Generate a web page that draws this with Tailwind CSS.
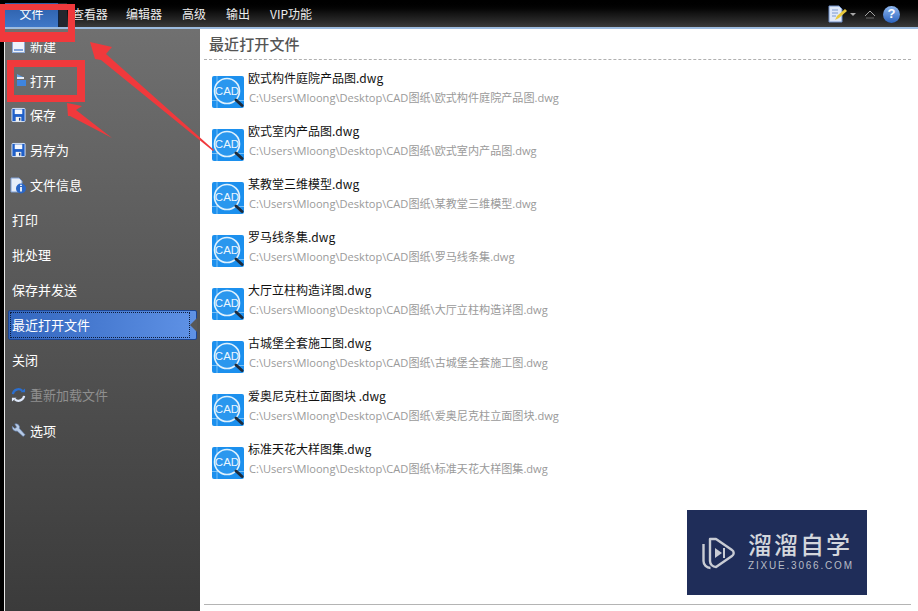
<!DOCTYPE html>
<html><head><meta charset="utf-8"><title>CAD</title>
<script src="https://cdn.jsdelivr.net/npm/@tailwindcss/browser@4"></script></head>
<body class="m-0 overflow-hidden bg-white">
<div class="relative w-[918px] h-[611px] overflow-hidden flex flex-col bg-white font-['Noto_Sans_CJK_SC','Liberation_Sans',sans-serif]">
  <svg width="0" height="0" class="absolute"><defs>
    <symbol id="cad" viewBox="0 0 32 32">
      <rect x="0" y="0" width="32" height="32" rx="2" fill="#1c90ee"/>
      <path d="M0 24.500H32M5 0V32" stroke="#8fcbf7" stroke-width="0.8"/>
      <circle cx="15" cy="15" r="12.500" fill="#2a97ee" stroke="#dff1fd" stroke-width="1.6"/>
      <path d="M24 24l6 5.500" stroke="#1d2b3c" stroke-width="3" stroke-linecap="round"/>
      <text x="15" y="19" text-anchor="middle" font-size="11.5" fill="#eaf6ff" font-family="Liberation Sans">CAD</text>
    </symbol>
    <symbol id="floppy" viewBox="0 0 16 16">
      <rect x="1" y="1" width="14" height="14" rx="1" fill="#1f5fc8" stroke="#dce8fa" stroke-width="1"/>
      <rect x="4" y="2" width="8" height="5" fill="#f4f7fd"/><rect x="5" y="10" width="6" height="5" fill="#f2f2f2"/><rect x="8.5" y="11" width="1.5" height="3" fill="#123a80"/>
    </symbol>
  </defs></svg>

  <!-- top menu bar -->
  <header class="h-[27px] shrink-0 flex items-end pl-[5px] pr-[18px] bg-gradient-to-b from-black via-[#141414] to-[#3a3a3a] text-[12px] text-[#ececec]">
    <div class="w-[53px] h-[24px] flex items-center justify-center pb-[2px] text-white bg-gradient-to-b from-[#2c5ea8] to-[#3f78c8]">文件</div>
    <div class="w-[9px] h-[24px] bg-[#23272e] border-l border-[#10233f]"></div>
    <nav class="flex items-center gap-[20px] h-[24px] ml-[5px] pb-[2px]">
      <span class="w-[34px] whitespace-nowrap tracking-[-0.1px]">查看器</span>
      <span class="w-[36px]">编辑器</span>
      <span class="w-[24px]">高级</span>
      <span class="w-[24px]">输出</span>
      <span class="whitespace-nowrap">VIP功能</span>
    </nav>
    <div class="ml-auto flex items-center h-[24px] pb-[2px]">
      <svg width="20" height="18" viewBox="0 0 20 18"><path d="M1 1h10l3 3v13H1z" fill="#dfe8f8" stroke="#6f8fc8"/><path d="M4 5h6M4 8h6M4 11h4" stroke="#7c9ad0"/><path d="M7 15l2-4 8-7 2 2-8 7z" fill="#e9c93c"/></svg>
      <svg width="8" height="6" viewBox="0 0 8 6" class="ml-[1px]"><path d="M1 2h6L4 5z" fill="#a8a8a8"/></svg>
      <svg width="12" height="10" viewBox="0 0 12 10" class="ml-[7px]"><path d="M1 7l5-5 5 5" fill="none" stroke="#a0a0a0"/><path d="M2 9h8" stroke="#666"/></svg>
      <div class="ml-[7px] w-[17px] h-[17px] rounded-full bg-gradient-to-b from-[#8fb7ee] to-[#2a62bd] flex items-center justify-center text-white text-[13px] font-bold font-['Liberation_Sans']">?</div>
    </div>
  </header>
  <div class="h-[2px] shrink-0 bg-[#9dbce0] ml-[5px]"></div>

  <div class="flex flex-1 min-h-0">
    <div class="w-[5px] shrink-0 bg-black border-r border-[#e8e8e8]"></div>
    <!-- sidebar -->
    <aside class="w-[195px] shrink-0 bg-gradient-to-b from-[#707070] to-[#3b3b3b] text-[13px] text-white">
      <div class="-mt-[1px]">
      <div class="h-[34.9px] flex items-center pl-[6px] gap-[4px]">
        <svg width="15" height="16" viewBox="0 0 15 16" class="shrink-0"><rect x="1.5" y="0.5" width="12" height="15" fill="#eef3fb" stroke="#8eaad6"/><path d="M3 13h9" stroke="#7fa2dc" stroke-width="2"/></svg><span>新建</span>
      </div>
      <div class="h-[34.9px] flex items-center pl-[6px] gap-[4px]">
        <svg width="15" height="16" viewBox="0 0 15 16" class="shrink-0"><path d="M6 2l6 3H6z" fill="#5fa0e8"/><path d="M6 5h7v2H6z" fill="#e7eefa"/><path d="M6 8h9v6H6z" fill="#3f85de"/></svg><span>打开</span>
      </div>
      <div class="h-[34.9px] flex items-center pl-[6px] gap-[4px]">
        <svg width="15" height="16" class="shrink-0"><use href="#floppy"/></svg><span>保存</span>
      </div>
      <div class="h-[34.9px] flex items-center pl-[6px] gap-[4px]">
        <svg width="15" height="16" class="shrink-0"><use href="#floppy"/></svg><span>另存为</span>
      </div>
      <div class="h-[34.9px] flex items-center pl-[5px] gap-[3px]">
        <svg width="17" height="17" viewBox="0 0 17 17" class="shrink-0"><path d="M1 1h8l3 3v11H1z" fill="#e6edf9" stroke="#7f9fd4"/><circle cx="11" cy="11.5" r="5" fill="#2a66c6"/><path d="M11 10v4.5M11 7.7v1.3" stroke="#fff" stroke-width="1.7"/></svg><span>文件信息</span>
      </div>
      <div class="h-[34.9px] flex items-center pl-[7px]">打印</div>
      <div class="h-[34.9px] flex items-center pl-[7px]">批处理</div>
      <div class="h-[34.9px] flex items-center pl-[7px]">保存并发送</div>
      <div class="h-[34.9px] flex items-center pl-[3px]">
        <div class="relative w-[189px] h-[30px] rounded-[2px] border border-[#1c4592] bg-gradient-to-r from-[#3366be] to-[#5f92e6] flex items-center">
          <div class="absolute left-[1px] top-[1px] right-[6px] bottom-[1px] border border-dotted border-[#0d1c3a]"></div>
          <span class="pl-[3px]">最近打开文件</span>
          <svg width="7" height="14" viewBox="0 0 7 14" class="absolute right-[-1px] top-[7px]"><path d="M7 0L0 7l7 7z" fill="#585858"/></svg>
        </div>
      </div>
      <div class="h-[34.9px] flex items-center pl-[7px]">关闭</div>
      <div class="h-[36px] flex items-center pl-[6px] gap-[4px]">
        <svg width="15" height="16" viewBox="0 0 16 16" class="shrink-0" fill="none"><path d="M2 7a6 6 0 0 1 10-3.5" stroke="#2b6fd0" stroke-width="2.4"/><path d="M14 9a6 6 0 0 1-10 3.5" stroke="#dfe9fa" stroke-width="2.4"/><path d="M10 5h5V1z" fill="#2b6fd0"/><path d="M6 11H1v4z" fill="#dfe9fa"/></svg><span class="text-[#8f8f8f]">重新加载文件</span>
      </div>
      <div class="h-[34.9px] flex items-center pl-[6px] gap-[4px]">
        <svg width="15" height="16" viewBox="0 0 16 16" class="shrink-0"><path d="M4 1.5A4 4 0 0 1 9 6.5l6 6.500-2 2-6.500-6A4 4 0 0 1 1.500 4L4 6.500 6 5z" fill="#b8cbe6" stroke="#5f7fb4" stroke-width="0.6"/></svg><span>选项</span>
      </div>
      </div>
    </aside>

    <!-- main -->
    <main class="relative flex-1 min-w-0 flex flex-col pl-[4px] pr-[7px] bg-white">
      <h1 class="h-[31px] shrink-0 pl-[5px] pt-[3px] text-[15px] leading-[24px] font-medium text-[#555] tracking-[0.1px] border-b border-dashed border-[#b0b0b0]">最近打开文件</h1>
      <ul class="pl-[8px] pt-[16px] flex flex-col">
        <li class="h-[53px] flex gap-[4px]"><svg width="32" height="32" class="shrink-0"><use href="#cad"/></svg><div class="-mt-[8px]"><div class="text-[12px] leading-[20px] text-[#111] whitespace-nowrap">欧式构件庭院产品图.dwg</div><div class="text-[11.1px] leading-[20px] text-[#9a9a9a] whitespace-nowrap font-['Open_Sans','Noto_Sans_CJK_SC'] pl-[1px]">C:\Users\Mloong\Desktop\CAD图纸\欧式构件庭院产品图.dwg</div></div></li>
        <li class="h-[53px] flex gap-[4px]"><svg width="32" height="32" class="shrink-0"><use href="#cad"/></svg><div class="-mt-[8px]"><div class="text-[12px] leading-[20px] text-[#111] whitespace-nowrap">欧式室内产品图.dwg</div><div class="text-[11.1px] leading-[20px] text-[#9a9a9a] whitespace-nowrap font-['Open_Sans','Noto_Sans_CJK_SC'] pl-[1px]">C:\Users\Mloong\Desktop\CAD图纸\欧式室内产品图.dwg</div></div></li>
        <li class="h-[53px] flex gap-[4px]"><svg width="32" height="32" class="shrink-0"><use href="#cad"/></svg><div class="-mt-[8px]"><div class="text-[12px] leading-[20px] text-[#111] whitespace-nowrap">某教堂三维模型.dwg</div><div class="text-[11.1px] leading-[20px] text-[#9a9a9a] whitespace-nowrap font-['Open_Sans','Noto_Sans_CJK_SC'] pl-[1px]">C:\Users\Mloong\Desktop\CAD图纸\某教堂三维模型.dwg</div></div></li>
        <li class="h-[53px] flex gap-[4px]"><svg width="32" height="32" class="shrink-0"><use href="#cad"/></svg><div class="-mt-[8px]"><div class="text-[12px] leading-[20px] text-[#111] whitespace-nowrap">罗马线条集.dwg</div><div class="text-[11.1px] leading-[20px] text-[#9a9a9a] whitespace-nowrap font-['Open_Sans','Noto_Sans_CJK_SC'] pl-[1px]">C:\Users\Mloong\Desktop\CAD图纸\罗马线条集.dwg</div></div></li>
        <li class="h-[53px] flex gap-[4px]"><svg width="32" height="32" class="shrink-0"><use href="#cad"/></svg><div class="-mt-[8px]"><div class="text-[12px] leading-[20px] text-[#111] whitespace-nowrap">大厅立柱构造详图.dwg</div><div class="text-[11.1px] leading-[20px] text-[#9a9a9a] whitespace-nowrap font-['Open_Sans','Noto_Sans_CJK_SC'] pl-[1px]">C:\Users\Mloong\Desktop\CAD图纸\大厅立柱构造详图.dwg</div></div></li>
        <li class="h-[53px] flex gap-[4px]"><svg width="32" height="32" class="shrink-0"><use href="#cad"/></svg><div class="-mt-[8px]"><div class="text-[12px] leading-[20px] text-[#111] whitespace-nowrap">古城堡全套施工图.dwg</div><div class="text-[11.1px] leading-[20px] text-[#9a9a9a] whitespace-nowrap font-['Open_Sans','Noto_Sans_CJK_SC'] pl-[1px]">C:\Users\Mloong\Desktop\CAD图纸\古城堡全套施工图.dwg</div></div></li>
        <li class="h-[53px] flex gap-[4px]"><svg width="32" height="32" class="shrink-0"><use href="#cad"/></svg><div class="-mt-[8px]"><div class="text-[12px] leading-[20px] text-[#111] whitespace-nowrap">爱奥尼克柱立面图块 .dwg</div><div class="text-[11.1px] leading-[20px] text-[#9a9a9a] whitespace-nowrap font-['Open_Sans','Noto_Sans_CJK_SC'] pl-[1px]">C:\Users\Mloong\Desktop\CAD图纸\爱奥尼克柱立面图块.dwg</div></div></li>
        <li class="h-[53px] flex gap-[4px]"><svg width="32" height="32" class="shrink-0"><use href="#cad"/></svg><div class="-mt-[8px]"><div class="text-[12px] leading-[20px] text-[#111] whitespace-nowrap">标准天花大样图集.dwg</div><div class="text-[11.1px] leading-[20px] text-[#9a9a9a] whitespace-nowrap font-['Open_Sans','Noto_Sans_CJK_SC'] pl-[1px]">C:\Users\Mloong\Desktop\CAD图纸\标准天花大样图集.dwg</div></div></li>
      </ul>
      <div class="mt-auto mb-[6px] h-[1px] bg-[#b4b4b4]"></div>
    </main>
  </div>

  <!-- watermark -->
  <div class="absolute left-[687px] top-[510px] w-[180px] h-[85px] bg-[#1f2d59] flex items-center pl-[15px] gap-[12px]">
    <svg width="34" height="34" viewBox="0 0 34 34" fill="none" stroke="#c9ccd4" stroke-width="2.4" stroke-linejoin="round"><path d="M1.500 8v17a7 7 0 0 0 7 7"/><path d="M8 3h6l16 11a3.500 3.500 0 0 1 0 6L14 31a6 6 0 0 1-6-6z"/><path d="M13 12l7 5-7 5z" fill="#c9ccd4" stroke="none"/><path d="M22 12v10" stroke-width="2"/></svg>
    <div class="flex flex-col items-start text-[#d3d6dc]">
      <div class="text-[24px] leading-[26px] tracking-[2px] font-medium whitespace-nowrap -mt-[1px]">溜溜自学</div>
      <div class="text-[10px] leading-[14px] tracking-[1.800px] font-['Liberation_Sans'] whitespace-nowrap mt-[2px] text-[#b8bcc6]">ZIXUE.3066.COM</div>
    </div>
  </div>

  <!-- annotations -->
  <svg class="absolute inset-0 pointer-events-none" width="918" height="611" viewBox="0 0 918 611">
    <path fill-rule="evenodd" fill="#f0393c" d="M0 4H75V42H0zM5 10V32H68V10z"/>
    <path fill-rule="evenodd" fill="#f0393c" d="M7 60H85V102H7zM14 67V95H77V67z"/>
    <path fill="#f0393c" d="M90 42L112 47L106 54L214 150L213 151L101 60L95 59z"/>
    <path fill="#f0393c" d="M67 103L82 106L76 110L112 138L70 116L68 116z"/>
  </svg>
</div>
</body></html>
